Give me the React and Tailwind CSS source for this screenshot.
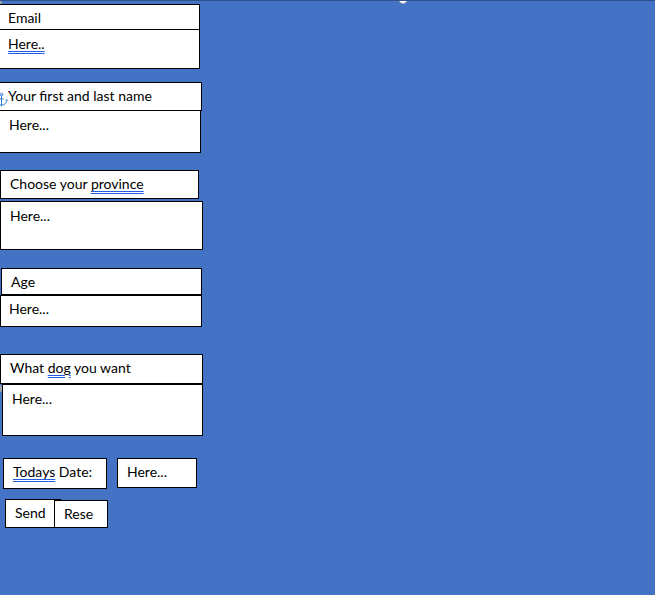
import { Anchor } from 'lucide-react'

function Box({ className = '', children }) {
  return (
    <div className={`relative shrink-0 border border-black bg-white text-[14px] leading-[14px] text-black ${className}`}>
      {children}
    </div>
  )
}

function Spell({ children }) {
  return <span className="underline decoration-[#1f5fe0] decoration-double decoration-1 underline-offset-[2px]">{children}</span>
}

export default function App() {
  return (
    <div className="relative h-[595px] w-full overflow-hidden border-t border-[#2f528f] bg-[#4472c4]" style={{ fontFamily: 'Lato, "Open Sans", sans-serif' }}>
      {/* resize handle */}
      <div className="absolute left-[398px] top-[-7px] h-[10px] w-[10px] rounded-full border border-gray-400 bg-white"></div>
      <div className="absolute left-0 top-0 h-[3px] w-[2px] bg-gray-400"></div>

      <div className="flex flex-col items-start">
        {/* Email */}
        <Box className="ml-[-1px] mt-[3px] h-[26px] w-[201px] pl-[8px] pt-[6px]">Email</Box>
        <Box className="ml-[-1px] -mt-px h-[40px] w-[201px] pl-[8px] pt-[7px]"><Spell>Here..</Spell></Box>

        {/* Name */}
        <Box className="ml-[-1px] mt-[13px] h-[29px] w-[203px] pl-[8px] pt-[6px]">
          <Anchor className="absolute left-[-6px] top-[9px] text-[#2b7bd0]" size={15} strokeWidth={1.6} />
          Your first and last name
        </Box>
        <Box className="ml-[-1px] -mt-px h-[43px] w-[202px] pl-[9px] pt-[7px]">Here...</Box>

        {/* Province */}
        <Box className="mt-[17px] h-[29px] w-[199px] pl-[9px] pt-[6px]">Choose your <Spell>province</Spell></Box>
        <Box className="mt-[2px] h-[49px] w-[203px] pl-[9px] pt-[7px]">Here...</Box>

        {/* Age */}
        <Box className="ml-[1px] mt-[18px] h-[27px] w-[201px] pl-[9px] pt-[6px]">Age</Box>
        <Box className="h-[32px] w-[202px] pl-[8px] pt-[6px]">Here...</Box>

        {/* Dog */}
        <Box className="mt-[27px] h-[30px] w-[203px] pl-[9px] pt-[6px]">What <Spell>dog</Spell> you want</Box>
        <div className="relative">
          <div className="absolute left-0 top-[1px] h-[7px] w-[3px] rounded-r-full bg-gray-400"></div>
          <Box className="ml-[2px] h-[52px] w-[201px] pl-[9px] pt-[7px]">Here...</Box>
        </div>

        {/* Date */}
        <div className="mt-[22px] flex items-start">
          <Box className="ml-[3px] h-[31px] w-[104px] pl-[9px] pt-[6px]"><Spell>Todays</Spell> Date:</Box>
          <Box className="ml-[10px] h-[30px] w-[80px] pl-[9px] pt-[6px]">Here...</Box>
        </div>

        {/* Buttons */}
        <div className="mt-[10px] flex items-start">
          <Box className="ml-[5px] h-[29px] w-[51px] pl-[9px] pt-[6px]">
            Send
            <div className="absolute left-full top-[-1px] h-px w-[6px] bg-black"></div>
          </Box>
          <Box className="-ml-[2px] mt-px h-[28px] w-[54px] pl-[9px] pt-[6px]">Rese</Box>
        </div>
      </div>
    </div>
  )
}
